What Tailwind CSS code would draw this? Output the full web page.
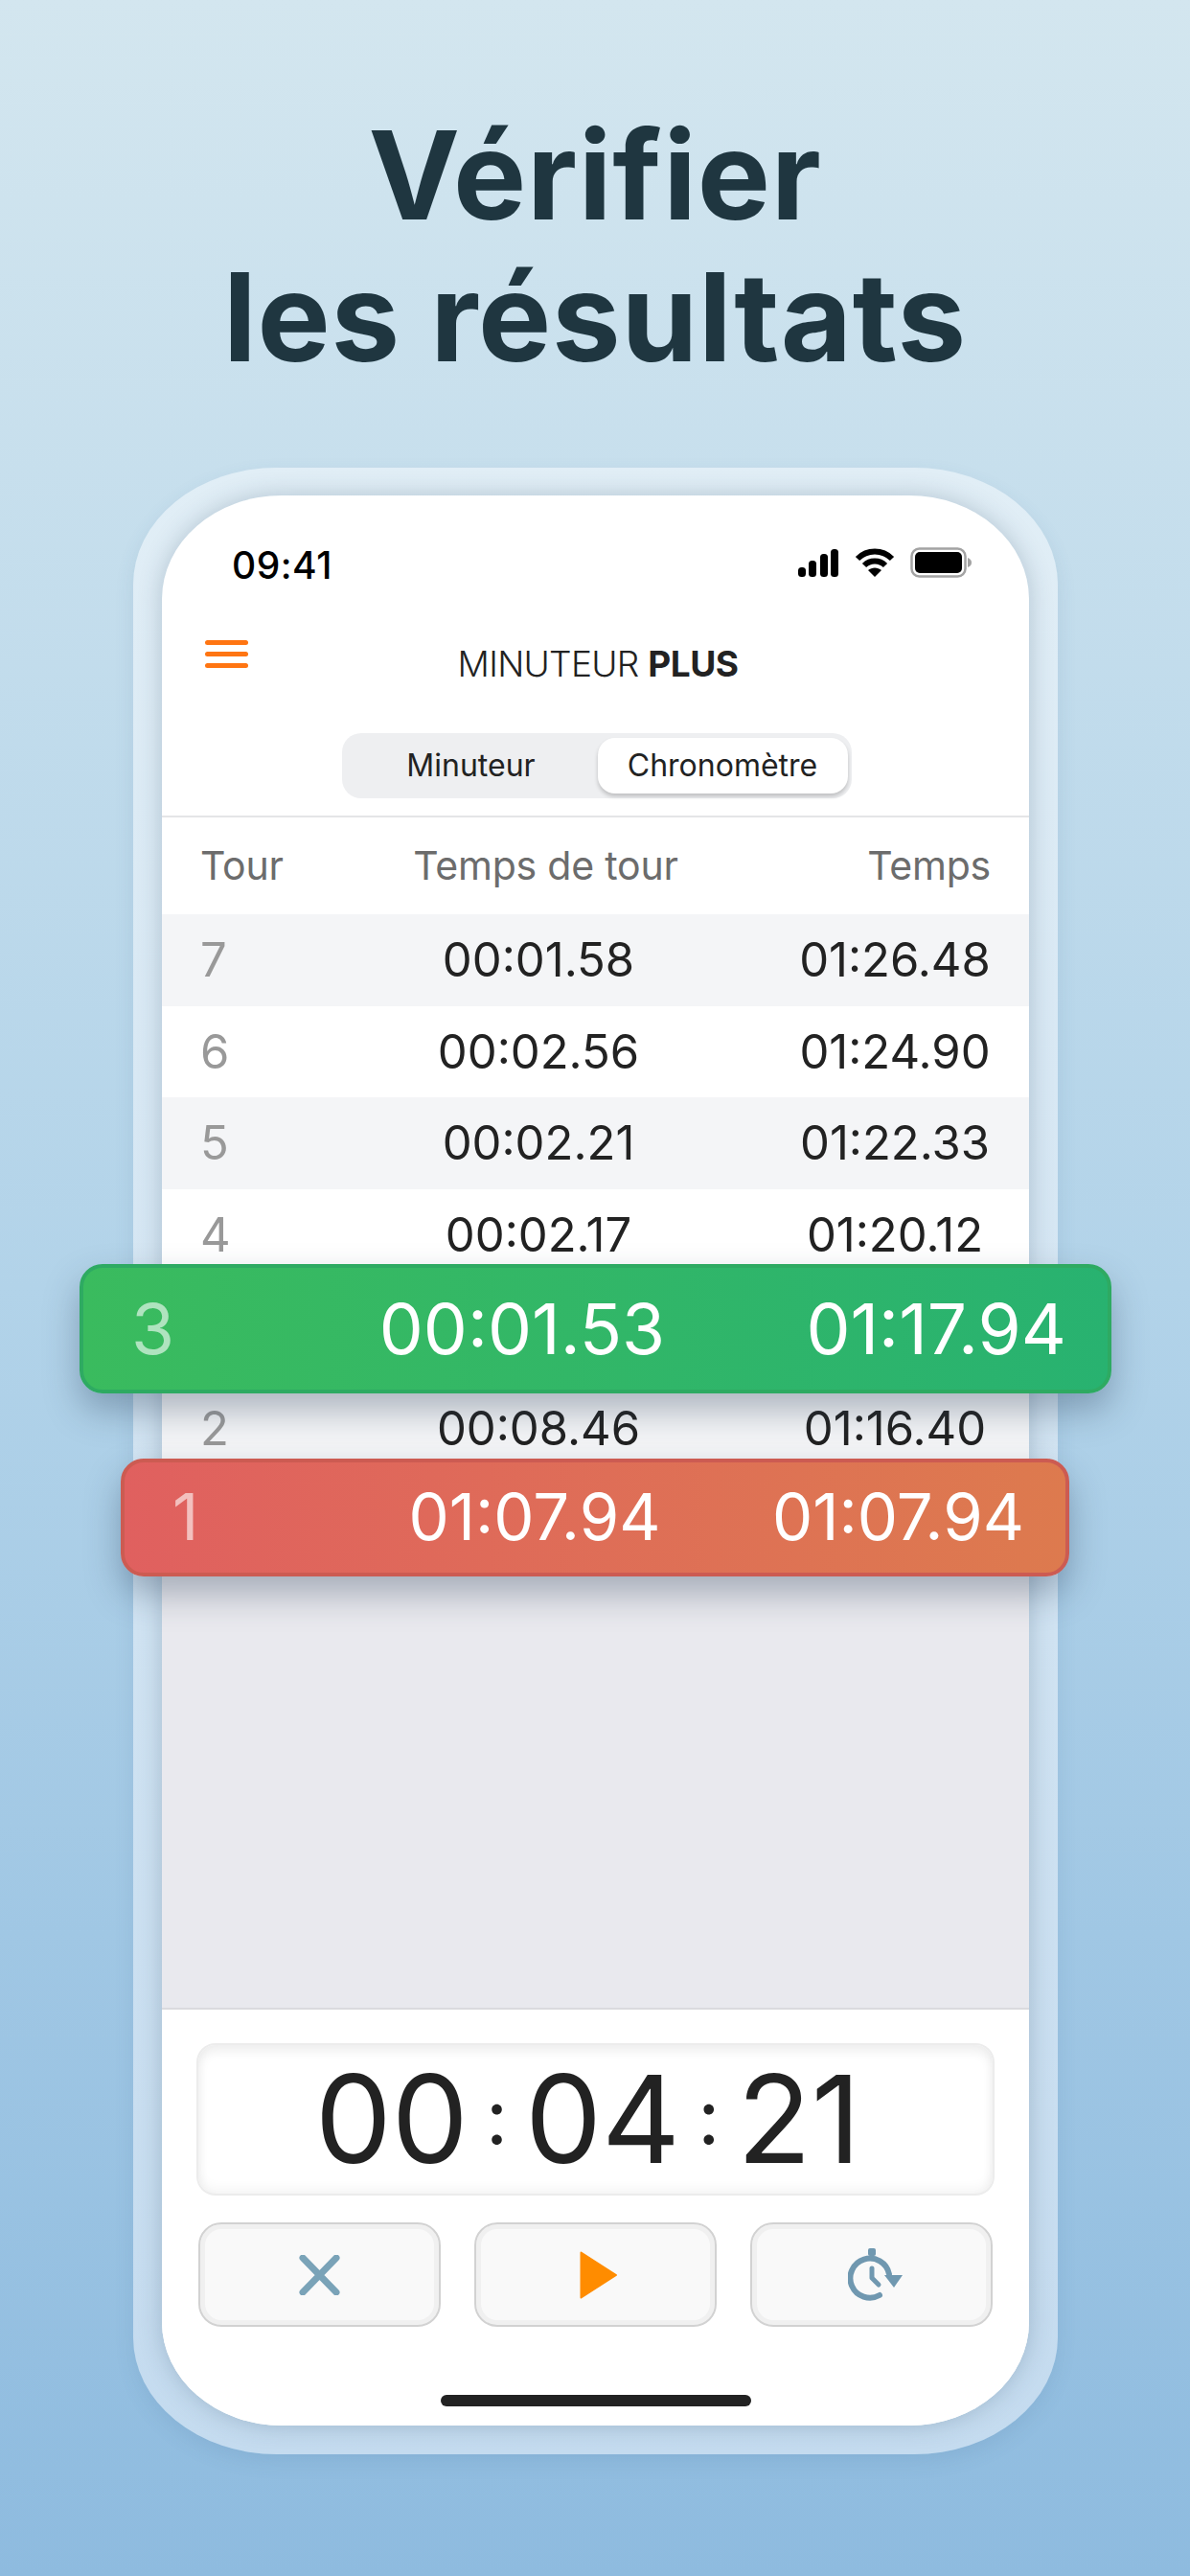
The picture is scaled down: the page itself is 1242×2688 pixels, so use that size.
<!doctype html>
<html lang="fr"><head><meta charset="utf-8">
<script src="https://cdn.jsdelivr.net/npm/@tailwindcss/browser@4"></script>
</head>
<body class="w-[1242px] h-[2688px] overflow-hidden bg-gradient-to-b from-[#d3e6ef] via-[#b2d3e9] to-[#8ebbdf] font-['Inter',sans-serif]">
<h1 class="pt-[109px] h-[488px] text-center text-[128px] leading-[148px] font-bold tracking-[0.8px] text-[#1f3640] font-['Inter',sans-serif]">Vérifier<br>les résultats</h1>

<div class="relative mx-[139px] w-[965px] h-[2073px] pt-[29px] px-[30px] rounded-[150px/122px] bg-gradient-to-b from-[#e1eef6] to-[#c4dbef] shadow-[0_8px_20px_rgba(60,100,140,0.12)]">
  <div class="flex flex-col w-[905px] h-[2014px] rounded-[125px/108px] overflow-hidden bg-white shadow-[0_0_24px_rgba(40,70,100,0.25)]">
    <!-- status -->
    <div class="h-[148px] shrink-0 pl-[73px] pr-[60px] pt-[48px] flex justify-between items-start">
      <span class="text-[39px] leading-[50px] font-medium text-black tracking-[0.5px] font-['Inter',sans-serif]">09:41</span>
      <div class="flex items-center gap-[16px] pt-[6px]">
        <svg width="44" height="30" viewBox="0 0 44 30"><rect x="1" y="20" width="8" height="10" rx="3.5"/><rect x="12" y="13" width="8" height="17" rx="3.5"/><rect x="24" y="6" width="8" height="24" rx="3.5"/><rect x="35" y="1" width="8" height="29" rx="3.5"/></svg>
        <svg width="42" height="30" viewBox="0 0 42 30"><path d="M3 11 C13 1 29 1 39 11" fill="none" stroke="#000" stroke-width="6"/><path d="M10 18 C16 12 26 12 32 18" fill="none" stroke="#000" stroke-width="6"/><path d="M14 23 C18 19.500 24 19.500 28 23 L21 30 Z"/></svg>
        <svg width="64" height="32" viewBox="0 0 64 32"><rect x="1.500" y="1.500" width="56" height="29" rx="8" fill="#fff" stroke="#a3a3a3" stroke-width="2.500"/><rect x="5" y="5" width="49" height="22" rx="5"/><path d="M60 11 C63 12 64 14 64 16 C64 18 63 20 60 21 Z" fill="#a3a3a3"/></svg>
      </div>
    </div>
    <!-- app header -->
    <div class="relative h-[100px] shrink-0 flex justify-center pt-[6px]">
      <div class="absolute left-[45px] top-[3px] w-[45px] flex flex-col gap-[7px]">
        <span class="h-[5px] rounded-full bg-[#ff7512]"></span><span class="h-[5px] rounded-full bg-[#ff7512]"></span><span class="h-[5px] rounded-full bg-[#ff7512]"></span>
      </div>
      <div class="pl-[5px] text-[37px] leading-[44px] text-[#222] tracking-[-0.7px] font-light font-['Inter',sans-serif]">MINUTEUR <span class="font-bold tracking-[-0.5px]">PLUS</span></div>
    </div>
    <!-- segmented -->
    <div class="h-[88px] shrink-0 border-b-2 border-[#e4e5e7] flex justify-center items-start">
      <div class="ml-[2px] w-[532px] h-[68px] rounded-[20px] bg-[#eeeff1] flex items-center pr-[4px] pl-[40px] justify-between">
        <span class="w-[190px] text-center text-[32px] text-[#222] font-['Inter',sans-serif]">Minuteur</span>
        <span class="w-[261px] h-[58px] rounded-[18px] bg-white shadow-[0_3px_4px_rgba(0,0,0,0.2)] flex items-center justify-center text-[32px] text-[#222] font-['Inter',sans-serif]">Chronomètre</span>
      </div>
    </div>
    <!-- table header -->
    <div class="h-[101px] shrink-0 grid grid-cols-[240px_226px_1fr] items-center px-[40px] text-[41px] tracking-[-0.2px] text-[#6c6c6c] font-['Inter',sans-serif]">
      <span>Tour</span><span class="text-center whitespace-nowrap -mx-[40px] pl-[15px]">Temps de tour</span><span class="text-right">Temps</span>
    </div>
    <!-- list -->
    <div class="flex-1 bg-[#e9e9ee] font-['Inter',sans-serif] text-[49px] text-[#222]">
      <div class="h-[96px] bg-[#f4f5f7] grid grid-cols-[240px_226px_1fr_200px] items-center pl-[40px] pr-[40px]"><span class="text-[#999]">7</span><span class="text-center whitespace-nowrap -mx-[20px]">00:01.58</span><span></span><span class="text-center whitespace-nowrap -mx-[20px]">01:26.48</span></div>
      <div class="h-[95px] bg-white grid grid-cols-[240px_226px_1fr_200px] items-center pl-[40px] pr-[40px]"><span class="text-[#999]">6</span><span class="text-center whitespace-nowrap -mx-[20px]">00:02.56</span><span></span><span class="text-center whitespace-nowrap -mx-[20px]">01:24.90</span></div>
      <div class="h-[96px] bg-[#f4f5f7] grid grid-cols-[240px_226px_1fr_200px] items-center pl-[40px] pr-[40px]"><span class="text-[#999]">5</span><span class="text-center whitespace-nowrap -mx-[20px]">00:02.21</span><span></span><span class="text-center whitespace-nowrap -mx-[20px]">01:22.33</span></div>
      <div class="h-[95px] bg-white grid grid-cols-[240px_226px_1fr_200px] items-center pl-[40px] pr-[40px]"><span class="text-[#999]">4</span><span class="text-center whitespace-nowrap -mx-[20px]">00:02.17</span><span></span><span class="text-center whitespace-nowrap -mx-[20px]">01:20.12</span></div>
      <div class="h-[107px] bg-[#f4f5f7]"></div>
      <div class="h-[95px] bg-[#f4f5f7] grid grid-cols-[240px_226px_1fr_200px] items-center pl-[40px] pr-[40px]"><span class="text-[#999]">2</span><span class="text-center whitespace-nowrap -mx-[20px]">00:08.46</span><span></span><span class="text-center whitespace-nowrap -mx-[20px]">01:16.40</span></div>
    </div>
    <!-- bottom -->
    <div class="h-[436px] shrink-0 bg-white border-t-2 border-[#dadade] px-[36px] pt-[35px]">
      <div class="h-[159px] rounded-[20px] border-2 border-[#ececec] bg-white shadow-[inset_0_6px_12px_rgba(0,0,0,0.07),inset_0_-6px_12px_rgba(0,0,0,0.04)] flex items-center justify-center gap-[18px] pr-[16px] text-[127px] leading-none text-[#222] font-['Inter',sans-serif]">
        <span>00</span><span class="text-[80px] pb-[8px]">:</span><span>04</span><span class="text-[80px] pb-[8px]">:</span><span>21</span>
      </div>
      <div class="mt-[28px] flex justify-between px-[2px]">
        <div class="w-[253px] h-[109px] rounded-[24px] border-2 border-[#d2d2d2] bg-[#f9f9f9] shadow-[inset_0_0_0_5px_#f0f0f0] flex items-center justify-center">
          <svg width="43" height="42" viewBox="0 0 43 42"><path d="M4 3 L39 39 M39 3 L4 39" stroke="#7aa3b8" stroke-width="7" stroke-linecap="round" fill="none"/></svg>
        </div>
        <div class="w-[253px] h-[109px] rounded-[24px] border-2 border-[#d2d2d2] bg-[#f9f9f9] shadow-[inset_0_0_0_5px_#f0f0f0] flex items-center justify-center">
          <svg class="ml-[7px]" width="40" height="50" viewBox="0 0 40 50"><path d="M1.500 1.500 L38 25 L1.500 48.500 Z" fill="#ff8c00" stroke="#ff8c00" stroke-width="2" stroke-linejoin="round"/></svg>
        </div>
        <div class="w-[253px] h-[109px] rounded-[24px] border-2 border-[#d2d2d2] bg-[#f9f9f9] shadow-[inset_0_0_0_5px_#f0f0f0] flex items-center justify-center">
          <svg class="ml-[7px]" width="57" height="56" viewBox="0 0 57 56"><path d="M33 49 A20.500 20.500 0 1 1 43 27" fill="none" stroke="#7098b0" stroke-width="6" stroke-linecap="round"/><rect x="21" y="0" width="8" height="8" rx="2" fill="#7098b0"/><path d="M25 21 L25 31 L32 38" fill="none" stroke="#7098b0" stroke-width="5" stroke-linecap="round" stroke-linejoin="round"/><path d="M38 28 L57 28 L48 41 Z" fill="#7098b0"/></svg>
        </div>
      </div>
      <div class="mt-[71px] mx-auto w-[324px] h-[12px] rounded-full bg-[#222]"></div>
    </div>
  </div>

  <!-- highlighted laps float over the phone edge -->
  <div class="absolute left-[-56px] top-[831px] w-[1077px] h-[135px] rounded-[24px] border-[4px] border-[#2eaa62] bg-gradient-to-r from-[#3abb5e] to-[#28b270] shadow-[0_18px_36px_rgba(40,60,85,0.35)] grid grid-cols-[248px_320px_1fr] items-center pl-[50px] pr-[43px] text-[73px] text-white font-['Inter',sans-serif]">
    <span class="text-white/60">3</span><span class="text-center whitespace-nowrap">00:01.53</span><span class="text-right whitespace-nowrap">01:17.94</span>
  </div>
  <div class="absolute left-[-13px] top-[1034px] w-[990px] h-[123px] rounded-[24px] border-[4px] border-[#cc5b52] bg-gradient-to-r from-[#e0605f] to-[#dd7a4e] shadow-[0_18px_36px_rgba(40,60,85,0.35)] grid grid-cols-[228px_300px_1fr] items-center pl-[50px] pr-[43px] text-[67px] text-white font-['Inter',sans-serif]">
    <span class="text-white/60">1</span><span class="text-center whitespace-nowrap">01:07.94</span><span class="text-right whitespace-nowrap">01:07.94</span>
  </div>
</div>
</body></html>
